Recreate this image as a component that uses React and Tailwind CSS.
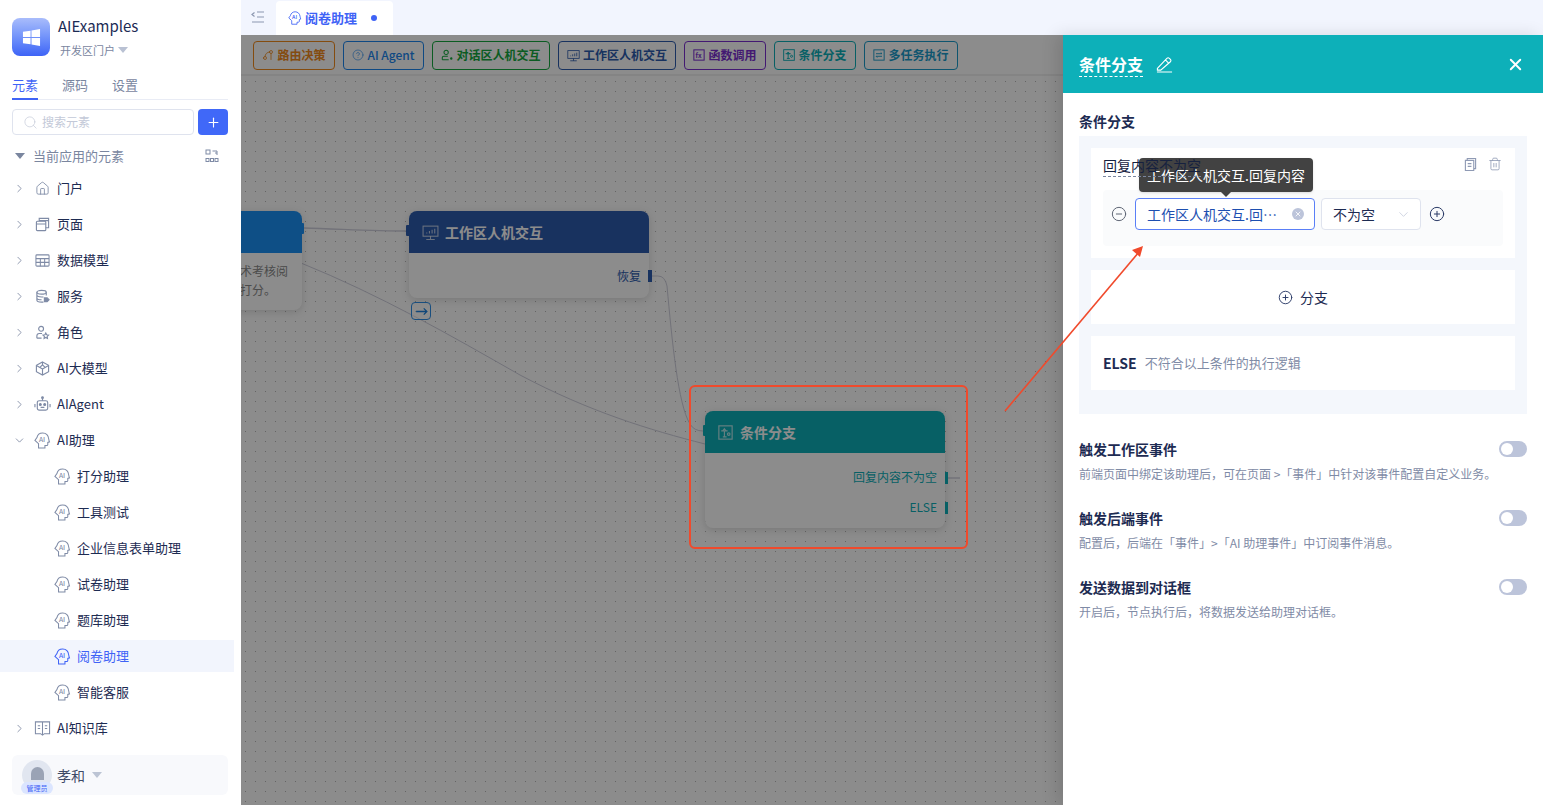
import React from "react";
import {
  ChevronRight, ChevronDown, House, Search, Plus, X, CircleMinus, CirclePlus,
  Trash2, GitBranch, CircleHelp,
} from "lucide-react";

// small icons not found in the icon package
const AiHead = ({ className = "text-[#7f8ba6]", size = "w-[17px] h-[17px]" }) => (
  <svg viewBox="0 0 18 18" className={`${size} ${className}`} fill="none" stroke="currentColor" strokeWidth="1.1">
    <path d="M4.8 12.4V17H11.6V14.4H13.4C14.2 14.4 14.6 13.9 14.6 13.3V11L16.4 10.4C16 9.4 15.7 8.4 15.6 7.4C15.2 3.4 12.6 1 9.2 1C6.2 1 3.6 3 3.1 6L1 8.9Z" />
    <text x="5.2" y="10.6" fontSize="7" fontWeight="500" fill="currentColor" stroke="none" fontFamily="Noto Sans CJK SC, sans-serif">AI</text>
  </svg>
);

const IconPage = () => (
  <svg viewBox="0 0 16 16" className="w-[15px] h-[15px] text-[#7f8ba6]" fill="none" stroke="currentColor" strokeWidth="1.2">
    <rect x="1.5" y="4.5" width="10" height="10" rx="1" />
    <path d="M1.5 7.5H11.5M4.5 4.5V1.5H14.5V11.5H11.5M4.5 3.8H14" />
  </svg>
);

const IconTable = () => (
  <svg viewBox="0 0 16 16" className="w-[15px] h-[15px] text-[#7f8ba6]" fill="none" stroke="currentColor" strokeWidth="1.1">
    <rect x="1" y="2" width="14" height="12" rx="1" />
    <path d="M1 6H15M1 10H15M5.7 6V14M10.3 6V14" />
  </svg>
);

const IconService = () => (
  <svg viewBox="0 0 16 16" className="w-[15px] h-[15px] text-[#7f8ba6]" fill="none" stroke="currentColor" strokeWidth="1.2">
    <ellipse cx="7" cy="3.5" rx="5" ry="2" />
    <path d="M2 3.5V12C2 13.2 4.2 14 7 14H9M2 6.5C2 7.7 4.2 8.5 7 8.5H9M2 9.5C2 10.7 4.2 11.5 7 11.5M12 3.5V7" />
    <path d="M10 9.5H13L15 11.5L13 13.5H10Z" fill="currentColor" />
  </svg>
);

const IconRole = () => (
  <svg viewBox="0 0 16 16" className="w-[15px] h-[15px] text-[#7f8ba6]" fill="none" stroke="currentColor" strokeWidth="1.2">
    <circle cx="6.5" cy="4" r="2.6" />
    <path d="M2 14V11.5C2 10 3.2 9 4.6 9H7.5M2 14H7" />
    <path d="M11.5 8.5L12.4 10.4L14.5 10.7L13 12.2L13.3 14.3L11.5 13.3L9.7 14.3L10 12.2L8.5 10.7L10.6 10.4Z" />
  </svg>
);

const IconModel = () => (
  <svg viewBox="0 0 16 16" className="w-[15px] h-[15px] text-[#7f8ba6]" fill="none" stroke="currentColor" strokeWidth="1.2">
    <path d="M8 1L14.5 4.5V11.5L8 15L1.5 11.5V4.5Z" />
    <path d="M8 8.5L8 15M8 8.5L2 5M8 8.5L14 5M8 1V4M5.5 6.5L8 4L10.5 6.5" />
  </svg>
);

const IconBot = () => (
  <svg viewBox="0 0 18 18" className="w-[17px] h-[17px] text-[#7f8ba6]" fill="none" stroke="currentColor" strokeWidth="1.2">
    <rect x="3.5" y="5" width="11" height="10" rx="2" />
    <path d="M9 5V2.5M1 8.5V12M17 8.5V12M7 12H11" />
    <circle cx="9" cy="1.8" r="0.9" fill="currentColor" />
    <circle cx="6.7" cy="9" r="1" fill="currentColor" />
    <circle cx="11.3" cy="9" r="1" fill="currentColor" />
  </svg>
);

const IconBook = () => (
  <svg viewBox="0 0 18 18" className="w-[17px] h-[17px] text-[#7f8ba6]" fill="none" stroke="currentColor" strokeWidth="1.1">
    <path d="M1.5 2H16.5V14.5H11L9 16L7 14.5H1.5ZM9 2V16M4 6H6.5M11.5 6H14M4 9H6.5M11.5 9H14" />
  </svg>
);

const IconFx = ({ className }) => (
  <svg viewBox="0 0 14 14" className={`w-[12px] h-[12px] ${className}`} fill="none" stroke="currentColor" strokeWidth="1.2">
    <rect x="1" y="1" width="12" height="12" />
    <text x="3" y="10" fontSize="7.5" fill="currentColor" stroke="none" fontFamily="Noto Sans CJK SC, sans-serif">fx</text>
  </svg>
);

const IconBranch = ({ className, size = "w-[12px] h-[12px]" }) => (
  <svg viewBox="0 0 14 14" className={`${size} ${className}`} fill="none" stroke="currentColor" strokeWidth="1.1">
    <rect x="0.8" y="0.8" width="12.4" height="12.4" />
    <path d="M3 5.5H9M6 3.5L7.6 5.5H4.4ZM6 5.5V11M4.5 11H8" />
    <circle cx="10" cy="8.5" r="1.2" />
  </svg>
);

const IconSwap = ({ className }) => (
  <svg viewBox="0 0 14 14" className={`w-[12px] h-[12px] ${className}`} fill="none" stroke="currentColor" strokeWidth="1.1">
    <rect x="1" y="1" width="12" height="12" />
    <path d="M3.5 5.5H10.5L9 4M10.5 8.5H3.5L5 10" />
  </svg>
);

const IconUserSmall = ({ className }) => (
  <svg viewBox="0 0 14 14" className={`w-[12px] h-[12px] ${className}`} fill="none" stroke="currentColor" strokeWidth="1.2">
    <circle cx="6" cy="4" r="2.5" />
    <path d="M1.5 12.5V10C1.5 9 2.4 8.5 3.2 8.5H8M1.5 12.5H9" />
    <circle cx="12" cy="11" r="0.8" fill="currentColor" />
  </svg>
);

const IconMonitor = ({ className, size = "w-[13px] h-[13px]" }) => (
  <svg viewBox="0 0 16 16" className={`${size} ${className}`} fill="none" stroke="currentColor" strokeWidth="1">
    <rect x="1" y="2" width="14" height="9.5" />
    <path d="M8 11.5V14.5M4 14.5H12M4.5 9V8M7 9V6.5M9.5 9V5.5M12 9V4.5" />
  </svg>
);

const IconGroup = () => (
  <svg viewBox="0 0 14 14" className="w-[14px] h-[14px] text-[#7f8ba6]" fill="none" stroke="currentColor" strokeWidth="1">
    <rect x="1" y="1" width="4" height="4" />
    <rect x="1" y="9.5" width="3" height="3" />
    <rect x="5.5" y="9.5" width="3" height="3" />
    <rect x="10" y="9.5" width="3" height="3" />
    <path d="M7.5 2H12V6M10 4H12" />
  </svg>
);

const Caret = ({ className = "" }) => (
  <svg viewBox="0 0 10 6" className={`w-[10px] h-[6px] ${className}`} fill="currentColor">
    <path d="M0 0H10L5 6Z" />
  </svg>
);

const tree = [
  { label: "门户", icon: <House className="w-[15px] h-[15px] text-[#7f8ba6]" strokeWidth={1.4} /> },
  { label: "页面", icon: <IconPage /> },
  { label: "数据模型", icon: <IconTable /> },
  { label: "服务", icon: <IconService /> },
  { label: "角色", icon: <IconRole /> },
  { label: "AI大模型", icon: <IconModel /> },
  { label: "AIAgent", icon: <IconBot /> },
  { label: "AI助理", icon: <AiHead />, open: true },
];

const assistants = ["打分助理", "工具测试", "企业信息表单助理", "试卷助理", "题库助理", "阅卷助理", "智能客服"];

const tools = [
  { label: "路由决策", w: "w-[82px]", cls: "border-[#f08a1d] text-[#f08a1d]", icon: <GitBranch className="w-[12px] h-[12px] rotate-180" strokeWidth={1.6} /> },
  { label: "AI Agent", w: "w-[81px]", cls: "border-[#1c86ee] text-[#1c86ee]", icon: <CircleHelp className="w-[12px] h-[12px]" strokeWidth={1.2} /> },
  { label: "对话区人机交互", w: "w-[118px]", cls: "border-[#14a83e] text-[#14a83e]", icon: <IconUserSmall /> },
  { label: "工作区人机交互", w: "w-[118px]", cls: "border-[#2c5bad] text-[#2c5bad]", icon: <IconMonitor /> },
  { label: "函数调用", w: "w-[82px]", cls: "border-[#7b2fd0] text-[#7b2fd0]", icon: <IconFx /> },
  { label: "条件分支", w: "w-[82px]", cls: "border-[#0db0b9] text-[#0db0b9]", icon: <IconBranch /> },
  { label: "多任务执行", w: "w-[94px]", cls: "border-[#1a9ccb] text-[#1a9ccb]", icon: <IconSwap /> },
];

const events = [
  { title: "触发工作区事件", desc: "前端页面中绑定该助理后，可在页面 >「事件」中针对该事件配置自定义业务。" },
  { title: "触发后端事件", desc: "配置后，后端在「事件」>「AI 助理事件」中订阅事件消息。" },
  { title: "发送数据到对话框", desc: "开启后，节点执行后，将数据发送给助理对话框。" },
];

const Sidebar = () => (
  <div className="w-[241px] h-full shrink-0 bg-white flex flex-col pl-3 pr-[13px] relative">
    <div className="flex items-start gap-2 pt-[18px] h-[70px]">
      <div className="w-[38px] h-[38px] rounded-lg bg-gradient-to-b from-[#a9bcfb] to-[#3f63f6] flex items-center justify-center">
        <svg viewBox="0 0 20 20" className="w-[19px] h-[19px]" fill="white">
          <path d="M1 4L9 2.8V9.5H1ZM10 2.6L19 1V9.5H10ZM1 10.5H9V17.2L1 16ZM10 10.5H19V19L10 17.4Z" />
        </svg>
      </div>
      <div className="flex flex-col">
        <span className="text-[15px] leading-[20px] text-[#1c2b55] -mt-[2px]">AIExamples</span>
        <span className="flex items-center gap-[3px] text-[11px] leading-[16px] text-[#7a869f] mt-[6px] ml-[2px]">
          开发区门户 <Caret className="text-[#b9c1d3] w-[9px]" />
        </span>
      </div>
    </div>

    <div className="flex gap-6 h-[30px] border-b border-[#e9ecf5] text-[13px] text-[#7a869f]">
      <span className="h-[30px] leading-[30px] text-[#3f63f6] border-b-2 border-[#3f63f6]">元素</span>
      <span className="leading-[30px]">源码</span>
      <span className="leading-[30px]">设置</span>
    </div>

    <div className="flex gap-1 mt-[9px] h-[26px]">
      <div className="flex-1 border border-[#dfe3ee] rounded flex items-center pl-[10px] gap-[4px] text-[12px] text-[#c3c9d8]">
        <Search className="w-[15px] h-[15px] text-[#c3c9d8]" strokeWidth={1.1} />
        搜索元素
      </div>
      <div className="w-[30px] bg-[#4068f8] rounded flex items-center justify-center">
        <Plus className="w-[15px] h-[15px] text-white" strokeWidth={1.8} />
      </div>
    </div>

    <div className="flex items-center h-[33px] mt-1 pl-[3px] pr-[9px] text-[13px] text-[#7a869f]">
      <Caret className="text-[#7a869f] mr-2" />
      <span className="flex-1">当前应用的元素</span>
      <IconGroup />
    </div>

    <div className="flex flex-col">
      {tree.map((t) => (
        <div key={t.label} className="h-8 mb-1 flex items-center text-[13px] text-[#1d2b52]">
          <span className="w-[14px] flex justify-center">
            {t.open ? (
              <ChevronDown className="w-[13px] h-[13px] text-[#6f7b98]" strokeWidth={1.4} />
            ) : (
              <ChevronRight className="w-[13px] h-[13px] text-[#6f7b98]" strokeWidth={1.4} />
            )}
          </span>
          <span className="w-[30px] flex justify-center ml-[1px]">{t.icon}</span>
          {t.label}
        </div>
      ))}
      {assistants.map((a) => {
        const active = a === "阅卷助理";
        return (
          <div
            key={a}
            className={`h-8 mb-1 -ml-3 mr-[-6px] pl-[54px] flex items-center gap-[6px] text-[13px] ${
              active ? "bg-[#f2f5fd] text-[#3f63f6]" : "text-[#1d2b52]"
            }`}
          >
            <AiHead className={active ? "text-[#3f63f6]" : "text-[#7f8ba6]"} />
            {a}
          </div>
        );
      })}
      <div className="h-8 flex items-center text-[13px] text-[#1d2b52]">
        <span className="w-[14px] flex justify-center">
          <ChevronRight className="w-[13px] h-[13px] text-[#6f7b98]" strokeWidth={1.4} />
        </span>
        <span className="w-[30px] flex justify-center ml-[1px]"><IconBook /></span>
        AI知识库
      </div>
    </div>

    <div className="mt-[11px] h-10 rounded-md bg-[#f8f9fc] flex items-center pl-[10px]">
      <div className="w-[30px] h-[30px] rounded-full bg-[#e1e6f0] relative flex justify-center">
        <div className="w-[13px] h-[13px] mt-[7px] rounded-t-full bg-[#9aa3b5]" />
        <span className="absolute -bottom-[4px] -left-[1px] w-[32px] h-[12px] rounded-full bg-[#dbe5ff] text-[7px] leading-[12px] text-center text-[#3f63f6]">管理员</span>
      </div>
      <span className="ml-[5px] text-[14px] text-[#3e4a66]">孝和</span>
      <Caret className="ml-[7px] text-[#bcc4d4]" />
    </div>
  </div>
);

const TabBar = () => (
  <div className="h-[35px] shrink-0 bg-[#f2f5fe] flex items-end pl-[10px]">
    <svg viewBox="0 0 14 12" className="w-[14px] h-[12px] mb-[12px] text-[#8c97b0]" fill="none" stroke="currentColor" strokeWidth="1.2">
      <path d="M3.5 1.5L1 3.5L3.5 5.5M6 1H13M6 6H13M1 11H13" />
    </svg>
    <div className="ml-[11px] w-[117px] h-[34px] bg-white rounded-t flex items-center pl-[12px] gap-[3px] text-[13px] font-bold text-[#3f63f6]">
      <AiHead className="text-[#3f63f6]" size="w-[14px] h-[14px]" />
      <span>阅卷助理</span>
      <span className="ml-[11px] w-[6px] h-[6px] rounded-full bg-[#3f63f6]" />
    </div>
  </div>
);

const Toolbar = () => (
  <div className="h-[41px] bg-white border-b-2 border-[#f0f0f0] flex items-start gap-2 pt-[6px] pl-3">
    {tools.map((t) => (
      <div key={t.label} className={`${t.w} h-[29px] rounded border flex items-center justify-center gap-[3px] pb-[1px] text-[12px] font-bold ${t.cls}`}>
        {t.icon}
        <span className={t.label === "AI Agent" ? "font-medium" : ""}>{t.label}</span>
      </div>
    ))}
  </div>
);

const Node = ({ className, header, icon, title, children }) => (
  <div className={`absolute w-[240px] rounded-lg bg-white shadow-[0_2px_8px_rgba(0,0,0,0.15)] ${className}`}>
    <div className={`h-[42px] rounded-t-lg flex items-center pl-[13px] gap-[6px] text-[14px] font-bold text-white ${header}`}>
      {icon}
      {title}
    </div>
    {children}
  </div>
);

const Canvas = () => (
  <div className="flex-1 h-full relative overflow-hidden bg-white flex flex-col">
    <Toolbar />
    <div className="flex-1 relative bg-[radial-gradient(circle_at_4.5px_5.5px,#b8b8b8_0.6px,transparent_0.6px)] bg-[length:10px_10px]">
      <svg viewBox="241 76 822 729" className="absolute left-0 top-0 w-[822px] h-[729px]" fill="none" stroke="#cfcfdc" strokeWidth="1">
        <path d="M304 228C340 229 375 231 406 231" strokeWidth="1.4" />
        <path d="M301 263C380 295 450 335 520 375C590 412 650 430 705 444" />
        <path d="M652 276H658Q665 276 667 286C672 340 678 405 690 424Q694 431 703 431" />
        <path d="M948 478H960" strokeWidth="1.4" />
      </svg>

      <Node className="-left-[179px] top-[135px] h-[99px]" header="bg-[#1a90f5]" title="">
        <div className="pl-[178px] pt-[8px] text-[12px] leading-[19px] text-[#8a8a8a] whitespace-nowrap overflow-hidden">
          <div>术考核阅</div>
          <div>打分。</div>
        </div>
        <span className="absolute -right-[2px] top-[12px] w-[4px] h-[11px] rounded-[1px] bg-[#1a90f5]" />
      </Node>

      <Node
        className="left-[168px] top-[135px] h-[87px]"
        header="bg-[#2c5bad]"
        icon={<IconMonitor className="text-white/70" size="w-[17px] h-[17px]" />}
        title={<span>工作区人机交互</span>}
      >
        <span className="absolute -left-[3px] top-[14px] w-[4px] h-[11px] rounded-[1px] bg-[#2c5bad]" />
        <div className="flex justify-end pr-2 pt-[13px] text-[12px] leading-[20px] text-[#2c5bad]">恢复</div>
        <span className="absolute -right-[3px] top-[59px] w-[4px] h-[12px] bg-[#2c5bad]" />
      </Node>

      <button className="absolute left-[170px] top-[226px] w-[20px] h-[18px] rounded border border-[#2f8fe6] bg-white/40 flex items-center justify-center">
        <svg viewBox="0 0 14 10" className="w-[13px] h-[9px] text-[#1c80dc]" fill="none" stroke="currentColor" strokeWidth="1.4">
          <path d="M1 5H13M9.5 1.5L13 5L9.5 8.5" />
        </svg>
      </button>

      <Node
        className="left-[464px] top-[335px] h-[117px]"
        header="bg-[#0db0b9]"
        icon={<IconBranch className="text-white/70" size="w-[15px] h-[15px]" />}
        title={<span className="ml-[1px]">条件分支</span>}
      >
        <span className="absolute -left-[2px] top-[14px] w-[3px] h-[11px] rounded-[1px] bg-[#0db0b9]" />
        <div className="flex flex-col items-end pr-2 pt-[9px] text-[12px] leading-[30px] text-[#0db0b9]">
          <span>回复内容不为空</span>
          <span>ELSE</span>
        </div>
        <span className="absolute -right-[3px] top-[61px] w-[3px] h-[12px] bg-[#0db0b9]" />
        <span className="absolute -right-[3px] top-[91px] w-[3px] h-[12px] bg-[#0db0b9]" />
      </Node>
    </div>

    {/* mask under the drawer */}
    <div className="absolute inset-0 bg-black/45" />
    <div className="absolute left-[448px] top-[350px] w-[279px] h-[164px] rounded-md border-2 border-[#f04a2c]" />
  </div>
);

const Toggle = () => (
  <span className="w-[28px] h-4 rounded-full bg-[#bcc4da] flex items-center pl-[2px]">
    <span className="w-3 h-3 rounded-full bg-white" />
  </span>
);

const Drawer = () => (
  <div className="w-[480px] shrink-0 h-full bg-white flex flex-col shadow-[-6px_0_16px_rgba(0,0,0,0.12)] relative">
    <div className="h-[58px] bg-[#0db0b9] flex items-center pl-4 pr-[18px] text-white">
      <span className="text-[16px] leading-[24px] font-bold border-b border-dashed border-white">条件分支</span>
      <svg viewBox="0 0 18 18" className="ml-[13px] w-[17px] h-[17px]" fill="none" stroke="currentColor" strokeWidth="1.2">
        <path d="M1.5 13L11.5 2.5C12.3 1.7 13.3 1.7 14.2 2.5L15.2 3.5C16 4.3 16 5.3 15.2 6.1L5 15H1.5ZM10 4.2L13.6 7.8M1 17H17" />
      </svg>
      <X className="ml-auto w-[19px] h-[19px]" strokeWidth={2.4} />
    </div>

    <div className="px-4 pt-[18px]">
      <div className="text-[14px] leading-[20px] h-[25px] font-bold text-[#1d2b52]">条件分支</div>

      <div className="bg-[#f4f7fc] p-3 pb-6 flex flex-col gap-3">
        <div className="h-[110px] bg-white px-3 pt-[7px] relative">
          <div className="flex justify-between items-start h-[35px]">
            <span className="relative z-10 text-[14px] leading-[20px] h-[22px] text-[#16213f] border-b border-dashed border-[#7a869f]">回复内容不为空</span>
            <span className="flex gap-[11px] mt-[2px] mr-[1px]">
              <svg viewBox="0 0 14 16" className="w-[13px] h-[15px] text-[#8f9ab4]" fill="none" stroke="currentColor" strokeWidth="1.2">
                <path d="M1.5 3.5H10.5V14.5H1.5ZM3.5 3.5V1.5H12.5V12.5H10.5M4 7H8M4 10H8" />
              </svg>
              <Trash2 className="w-[14px] h-[14px] text-[#8f9ab4]" strokeWidth={1.4} />
            </span>
          </div>
          <div className="h-[56px] rounded bg-[#fafbfc] flex items-start pt-[8px] pl-[8px]">
            <CircleMinus className="w-[16px] h-[16px] mt-[8px] text-[#5f6675]" strokeWidth={1.5} />
            <div className="ml-[8px] w-[180px] h-8 rounded border border-[#5a7ff7] bg-white flex items-center pl-[11px] pr-[10px] text-[14px] text-[#1d4fb0]">
              <span className="flex-1 whitespace-nowrap">工作区人机交互.回⋯</span>
              <span className="w-[12px] h-[12px] rounded-full bg-[#bcc4da] flex items-center justify-center">
                <X className="w-[8px] h-[8px] text-white" strokeWidth={2.5} />
              </span>
            </div>
            <div className="ml-[6px] w-[100px] h-8 rounded border border-[#dfe3ee] bg-white flex items-center pl-[11px] pr-[9px] text-[14px] text-[#1d2b52]">
              <span className="flex-1">不为空</span>
              <ChevronDown className="w-[15px] h-[15px] text-[#c6ccdb]" strokeWidth={1.3} />
            </div>
            <CirclePlus className="ml-[8px] mt-[8px] w-[16px] h-[16px] text-[#2a3a66]" strokeWidth={1.5} />
          </div>

          {/* tooltip */}
          <div className="absolute left-[48px] top-[10px] w-[174px] h-[34px] rounded bg-[#424242] text-white text-[14px] leading-[34px] text-center shadow">
            工作区人机交互.回复内容
            <span className="absolute left-[82px] top-[34px] w-0 h-0 border-x-[5px] border-x-transparent border-t-[5px] border-t-[#424242]" />
          </div>
        </div>

        <div className="h-[54px] bg-white flex items-center justify-center gap-[7px] text-[14px] text-[#1d2b52]">
          <CirclePlus className="w-[15px] h-[15px] text-[#2a3a66]" strokeWidth={1.5} />
          分支
        </div>

        <div className="h-[54px] bg-white flex items-center px-3 gap-2">
          <span className="text-[14px] font-bold text-[#1d2b52]">ELSE</span>
          <span className="text-[13px] text-[#7f8ba6]">不符合以上条件的执行逻辑</span>
        </div>
      </div>

      <div className="flex flex-col gap-[24px] pt-[25px]">
        {events.map((e) => (
          <div key={e.title} className="relative h-[45px]">
            <div className="flex justify-between items-center h-5">
              <span className="text-[14px] font-bold text-[#1d2b52]">{e.title}</span>
              <Toggle />
            </div>
            <div className="mt-[5px] text-[12px] leading-[20px] text-[#7f8ba6]">{e.desc}</div>
          </div>
        ))}
      </div>
    </div>
  </div>
);

const App = () => {
  return (
    <div className="relative h-screen w-full overflow-hidden flex font-['Noto_Sans_CJK_SC','Noto_Sans',sans-serif]">
      <Sidebar />
      <div className="flex-1 min-w-0 h-full flex flex-col">
        <TabBar />
        <div className="flex-1 min-h-0 flex">
          <Canvas />
          <Drawer />
        </div>
      </div>

      {/* red pointer drawn over the page */}
      <svg viewBox="0 0 1543 805" className="absolute left-0 top-0 w-[1543px] h-[805px] pointer-events-none" fill="none">
        <path d="M1005 411L1139 252" stroke="#f04a2c" strokeWidth="1.6" />
        <path d="M1143 246L1140 257L1132 250Z" fill="#f04a2c" />
      </svg>
    </div>
  );
};

export default App;
